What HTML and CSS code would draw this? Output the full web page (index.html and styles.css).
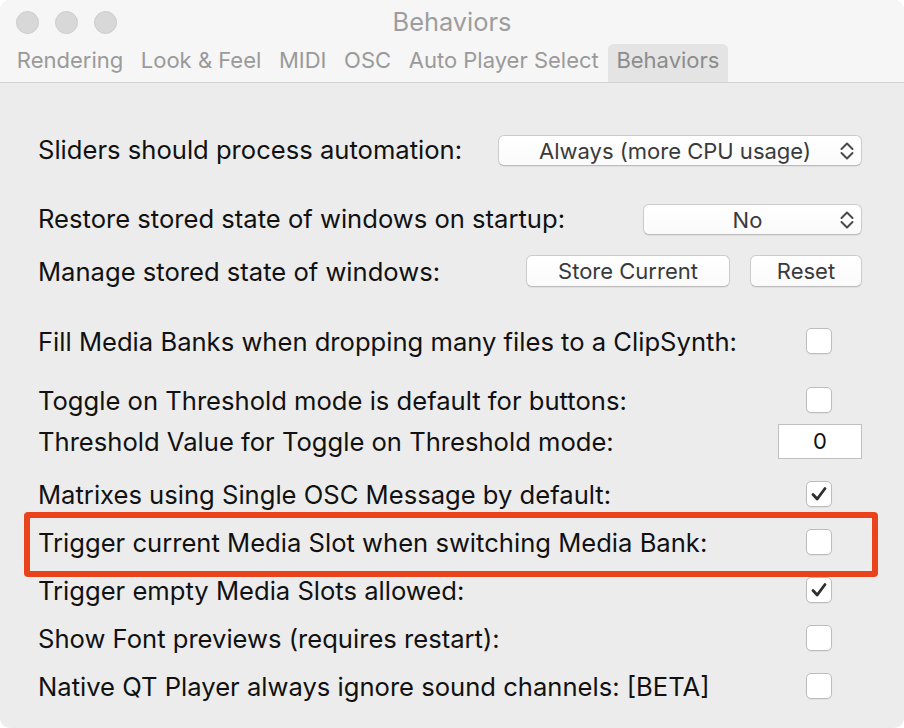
FILE: index.html
```html
<!DOCTYPE html>
<html>
<head>
    <title>Behaviors</title>
    <link rel="stylesheet" href="styles.css">
</head>
<body>
    <div class="window">
        <div class="titlebar">
            <div class="title-row">
                <div class="lights">
                    <span class="light"></span>
                    <span class="light"></span>
                    <span class="light"></span>
                </div>
                <div class="title">Behaviors</div>
            </div>
            <div class="tabs">
                <span class="tab">Rendering</span>
                <span class="tab">Look &amp; Feel</span>
                <span class="tab">MIDI</span>
                <span class="tab">OSC</span>
                <span class="tab">Auto Player Select</span>
                <span class="tab active">Behaviors</span>
            </div>
        </div>

        <div class="prefs">
            <div class="group group-sliders">
                <div class="row">
                    <span class="label">Sliders should process automation:</span>
                    <div class="popup popup-wide">
                        <span class="popup-text">Always (more CPU usage)</span>
                        <svg class="stepper" width="16" height="20" viewBox="0 0 16 20"><path d="M2.5 8 L8 2.5 L13.5 8 M2.5 12 L8 17.5 L13.5 12" /></svg>
                    </div>
                </div>
            </div>

            <div class="group group-windows">
                <div class="row">
                    <span class="label">Restore stored state of windows on startup:</span>
                    <div class="popup popup-narrow">
                        <span class="popup-text">No</span>
                        <svg class="stepper" width="16" height="20" viewBox="0 0 16 20"><path d="M2.5 8 L8 2.5 L13.5 8 M2.5 12 L8 17.5 L13.5 12" /></svg>
                    </div>
                </div>
                <div class="row">
                    <span class="label">Manage stored state of windows:</span>
                    <div class="buttons">
                        <button class="btn btn-store">Store Current</button>
                        <button class="btn btn-reset">Reset</button>
                    </div>
                </div>
            </div>

            <div class="group group-fill">
                <div class="row">
                    <span class="label">Fill Media Banks when dropping many files to a ClipSynth:</span>
                    <span class="check"></span>
                </div>
            </div>

            <div class="group group-toggle">
                <div class="row">
                    <span class="label">Toggle on Threshold mode is default for buttons:</span>
                    <span class="check"></span>
                </div>
                <div class="row">
                    <span class="label">Threshold Value for Toggle on Threshold mode:</span>
                    <input class="number-field" type="text" value="0">
                </div>
            </div>

            <div class="group group-flags">
                <div class="row">
                    <span class="label">Matrixes using Single OSC Message by default:</span>
                    <span class="check"><svg width="24" height="24" viewBox="0 0 24 24"><path d="M6 12.5 L10.2 17 L18 6.5" /></svg></span>
                </div>
                <div class="row highlighted">
                    <span class="label">Trigger current Media Slot when switching Media Bank:</span>
                    <span class="check"></span>
                </div>
                <div class="row">
                    <span class="label">Trigger empty Media Slots allowed:</span>
                    <span class="check"><svg width="24" height="24" viewBox="0 0 24 24"><path d="M6 12.5 L10.2 17 L18 6.5" /></svg></span>
                </div>
                <div class="row">
                    <span class="label">Show Font previews (requires restart):</span>
                    <span class="check"></span>
                </div>
                <div class="row">
                    <span class="label">Native QT Player always ignore sound channels: [BETA]</span>
                    <span class="check"></span>
                </div>
            </div>
        </div>
    </div>
</body>
</html>
```

FILE: styles.css
```css
html, body { margin: 0; padding: 0; background: #fff; }
body { font-family: "Inter", "Liberation Sans", sans-serif; }

.window {
    width: 904px;
    height: 728px;
    background: #ececec;
    border-radius: 10px;
    overflow: hidden;
}

/* title bar + toolbar tabs */
.titlebar {
    background: #f6f6f6;
    border-bottom: 1px solid #d3d3d3;
}
.title-row {
    height: 44px;
    display: flex;
    align-items: center;
    position: relative;
}
.lights {
    display: flex;
    gap: 16px;
    padding-left: 16px;
}
.light {
    width: 23px;
    height: 23px;
    border-radius: 50%;
    background: #d8d8d8;
    border: 1px solid #cdcdcd;
    box-sizing: border-box;
}
.title {
    position: absolute;
    left: 0;
    right: 0;
    top: 7px;
    text-align: center;
    font-size: 25.4px;
    line-height: 30px;
    color: #9d9d9d;
    pointer-events: none;
}
.tabs {
    display: flex;
    height: 38px;
    padding-left: 8px;
}
.tab {
    padding: 0 8.8px 6px;
    display: flex;
    align-items: center;
    font-size: 22px;
    color: #9a9a9a;
    border-radius: 6px 6px 0 0;
}
.tab.active {
    background: #e4e4e4;
    color: #8c8c8c;
}

/* preference rows */
.prefs {
    padding: 46px 42px 0 38px;
}
.group { display: flex; flex-direction: column; }
.group-windows { margin-top: 29px; gap: 13px; }
.group-fill { margin-top: 30px; }
.group-toggle { margin-top: 19px; gap: 1px; }
.group-flags { margin-top: 13px; gap: 8px; }

.row {
    height: 40px;
    display: flex;
    align-items: center;
    justify-content: space-between;
    position: relative;
}
.label {
    font-size: 25.6px;
    color: #111;
    white-space: nowrap;
}
.row.highlighted::after {
    content: "";
    position: absolute;
    left: -14px;
    right: -16px;
    top: -10px;
    bottom: -15px;
    border: 6px solid #e9431b;
    border-radius: 4px;
}

.popup, .btn {
    height: 31px;
    background: linear-gradient(#ffffff, #fafafa);
    border: 1px solid #cbcbcb;
    border-bottom-color: #bcbcbc;
    border-radius: 6px;
    box-shadow: 0 1px 1px rgba(0,0,0,0.06);
    box-sizing: border-box;
    font-family: inherit;
    font-size: 22px;
    color: #3a3a3a;
}
.popup {
    display: flex;
    align-items: center;
    padding-right: 6px;
    margin-top: 3px;
}
.popup-wide { width: 364px; }
.popup-narrow { width: 219px; }
.popup-text {
    flex: 1;
    text-align: center;
    padding-left: 12px;
    padding-top: 1px;
}
.stepper path {
    fill: none;
    stroke: #4a4a4a;
    stroke-width: 2;
    stroke-linecap: round;
    stroke-linejoin: round;
}
.buttons { display: flex; gap: 20px; }
.btn { height: 32px; padding: 0; }
.btn-store { width: 204px; }
.btn-reset { width: 112px; }

.check {
    width: 26px;
    height: 26px;
    margin-right: 30px;
    background: #fff;
    border: 1px solid #bdbdbd;
    border-radius: 5px;
    box-sizing: border-box;
    box-shadow: 0 1px 1px rgba(0,0,0,0.05);
    display: flex;
    align-items: center;
    justify-content: center;
}
.check path {
    fill: none;
    stroke: #2e2e2e;
    stroke-width: 2.8;
    stroke-linecap: round;
    stroke-linejoin: round;
}
.number-field {
    width: 84px;
    height: 35px;
    box-sizing: border-box;
    border: 1px solid #bfbfbf;
    background: #fff;
    text-align: center;
    font-family: inherit;
    font-size: 22px;
    color: #111;
    padding: 0;
    outline: none;
}
```
